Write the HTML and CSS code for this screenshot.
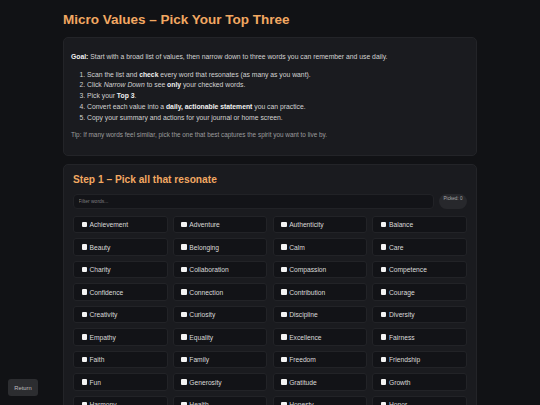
FILE: index.html
```html
<!DOCTYPE html>
<html lang="en">
<head>
<meta charset="utf-8">
<title>Micro Values – Pick Your Top Three</title>
<link rel="stylesheet" href="styles.css">
</head>
<body>
<main class="page">
  <h1 class="title">Micro Values – Pick Your Top Three</h1>

  <section class="card intro">
    <p><strong>Goal:</strong> Start with a broad list of values, then narrow down to three words you can remember and use daily.</p>
    <ol>
      <li>Scan the list and <strong>check</strong> every word that resonates (as many as you want).</li>
      <li>Click <em>Narrow Down</em> to see <strong>only</strong> your checked words.</li>
      <li>Pick your <strong>Top 3</strong>.</li>
      <li>Convert each value into a <strong>daily, actionable statement</strong> you can practice.</li>
      <li>Copy your summary and actions for your journal or home screen.</li>
    </ol>
    <p class="tip">Tip: If many words feel similar, pick the one that best captures the spirit you want to live by.</p>
  </section>

  <section class="card step">
    <h2 class="step-title">Step 1 – Pick all that resonate</h2>
    <div class="toolbar">
      <input class="filter" type="text" placeholder="Filter words...">
      <span class="picked">Picked: 0</span>
    </div>
    <div class="grid">
      <label class="item"><input type="checkbox"><span>Achievement</span></label>
      <label class="item"><input type="checkbox"><span>Adventure</span></label>
      <label class="item"><input type="checkbox"><span>Authenticity</span></label>
      <label class="item"><input type="checkbox"><span>Balance</span></label>
      <label class="item"><input type="checkbox"><span>Beauty</span></label>
      <label class="item"><input type="checkbox"><span>Belonging</span></label>
      <label class="item"><input type="checkbox"><span>Calm</span></label>
      <label class="item"><input type="checkbox"><span>Care</span></label>
      <label class="item"><input type="checkbox"><span>Charity</span></label>
      <label class="item"><input type="checkbox"><span>Collaboration</span></label>
      <label class="item"><input type="checkbox"><span>Compassion</span></label>
      <label class="item"><input type="checkbox"><span>Competence</span></label>
      <label class="item"><input type="checkbox"><span>Confidence</span></label>
      <label class="item"><input type="checkbox"><span>Connection</span></label>
      <label class="item"><input type="checkbox"><span>Contribution</span></label>
      <label class="item"><input type="checkbox"><span>Courage</span></label>
      <label class="item"><input type="checkbox"><span>Creativity</span></label>
      <label class="item"><input type="checkbox"><span>Curiosity</span></label>
      <label class="item"><input type="checkbox"><span>Discipline</span></label>
      <label class="item"><input type="checkbox"><span>Diversity</span></label>
      <label class="item"><input type="checkbox"><span>Empathy</span></label>
      <label class="item"><input type="checkbox"><span>Equality</span></label>
      <label class="item"><input type="checkbox"><span>Excellence</span></label>
      <label class="item"><input type="checkbox"><span>Fairness</span></label>
      <label class="item"><input type="checkbox"><span>Faith</span></label>
      <label class="item"><input type="checkbox"><span>Family</span></label>
      <label class="item"><input type="checkbox"><span>Freedom</span></label>
      <label class="item"><input type="checkbox"><span>Friendship</span></label>
      <label class="item"><input type="checkbox"><span>Fun</span></label>
      <label class="item"><input type="checkbox"><span>Generosity</span></label>
      <label class="item"><input type="checkbox"><span>Gratitude</span></label>
      <label class="item"><input type="checkbox"><span>Growth</span></label>
      <label class="item"><input type="checkbox"><span>Harmony</span></label>
      <label class="item"><input type="checkbox"><span>Health</span></label>
      <label class="item"><input type="checkbox"><span>Honesty</span></label>
      <label class="item"><input type="checkbox"><span>Honor</span></label>
      <label class="item"><input type="checkbox"><span>Hope</span></label>
      <label class="item"><input type="checkbox"><span>Humility</span></label>
      <label class="item"><input type="checkbox"><span>Humor</span></label>
      <label class="item"><input type="checkbox"><span>Independence</span></label>
    </div>
  </section>
</main>
<button class="return" type="button">Return</button>
</body>
</html>
```

FILE: styles.css
```css
* { box-sizing: border-box; }

html, body {
  margin: 0;
  padding: 0;
  background: #111215;
  color: #d6d6d6;
  font-family: "Liberation Sans", Arial, sans-serif;
}

.page {
  width: 414px;
  margin: 0 auto;
  padding-top: 12px;
}

.title {
  margin: 0 0 9px;
  font-size: 13.5px;
  line-height: 16px;
  font-weight: 700;
  color: #f2a862;
}

.card {
  background: #1a1b1f;
  border: 1px solid #232428;
  border-radius: 5px;
}

.intro {
  padding: 7px;
  font-size: 6.8px;
  line-height: 10.7px;
  color: #d2d2d2;
}

.intro p { margin: 7px 0; }
.intro strong { color: #f0f0f0; }

.intro ol {
  margin: 7px 0;
  padding-left: 16px;
}

.intro .tip {
  font-size: 6.4px;
  color: #9c9c9e;
}

.step {
  margin-top: 8px;
  padding: 9px;
}

.step-title {
  margin: 0 0 8px;
  font-size: 10.2px;
  line-height: 12px;
  font-weight: 700;
  color: #f2a862;
}

.toolbar {
  display: flex;
  align-items: center;
  gap: 5px;
  margin-bottom: 7px;
}

.filter {
  flex: 1;
  height: 15px;
  padding: 0 4.5px;
  background: #131418;
  border: 1px solid #212226;
  border-radius: 4px;
  color: #ddd;
  font-family: inherit;
  font-size: 5px;
  outline: none;
}

.filter::placeholder { color: #7c7d80; }

.picked {
  width: 28px;
  height: 15px;
  padding-top: 2px;
  border-radius: 8px;
  background: #27282c;
  color: #a8a9ab;
  font-size: 4.6px;
  line-height: 6px;
  text-align: center;
}

.grid {
  display: grid;
  grid-template-columns: repeat(4, 1fr);
  column-gap: 5.3px;
  row-gap: 5px;
}

.item {
  display: flex;
  align-items: center;
  gap: 2.5px;
  height: 17.5px;
  padding-left: 7.5px;
  background: #121317;
  border: 1px solid #222327;
  border-radius: 3px;
  font-size: 6.7px;
  color: #dadada;
}

.item input {
  appearance: none;
  -webkit-appearance: none;
  width: 5.5px;
  height: 5.5px;
  margin: 0;
  border: none;
  border-radius: 1px;
  background: #f4f4f4;
}

.return {
  position: fixed;
  left: 8px;
  bottom: 9px;
  width: 30px;
  height: 17px;
  padding: 0;
  border: none;
  border-radius: 3px;
  background: #2c2d30;
  color: #bcbcbc;
  font-family: inherit;
  font-size: 5.8px;
}
```
